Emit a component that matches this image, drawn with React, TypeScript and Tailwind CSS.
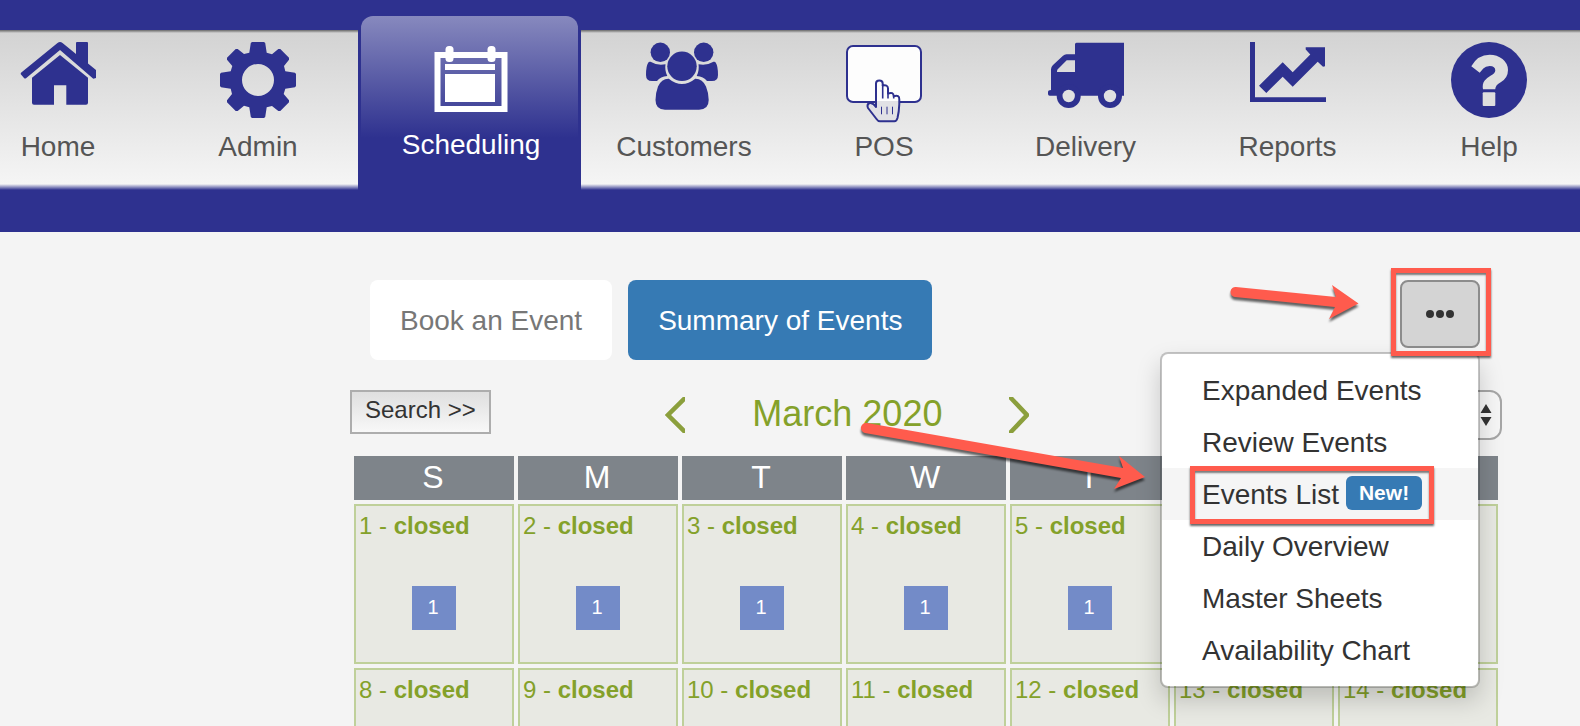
import { ReactNode } from "react";
import clsx from "clsx";

function HomeIcon() {
  return (
    <svg viewBox="0 0 76 76" className="size-[76px]" fill="#2e318f">
      <path d="M37.5 1Q40 -1 42.5 1L56 12V1Q56 0 57 0H67Q68 0 68 1V21.5L76 28V36L73.3 36.7L40 8L6 36.2Q5 37 4 36L1 32.5Q0.3 31.5 1.3 30.6Z" />
      <path d="M40 13L68 35.7V60.7Q68 62.7 66 62.7H46.3V43.3H34V62.7H14Q12 62.7 12 60.7V35.7Z" />
    </svg>
  );
}

function GearIcon() {
  return (
    <svg viewBox="-38 -38 76 76" className="size-[76px]" fill="#2e318f">
      <path
        fillRule="evenodd"
        d="M-6 -38H6L7.2 -37L8.7 -27.3L14 -25.7L20.3 -31L22.3 -31L31 -22.3V-20.3L26 -14L27.3 -8.7L37 -7.2L38 -6V6L37 7.2L27.3 8.7L25.7 14L31 20.3V22.3L22.3 31H20.3L14 26L8.7 27.3L7.2 37L6 38H-6L-7.2 37L-8.7 27.3L-14 25.7L-20.3 31H-22.3L-31 22.3V20.3L-26 14L-27.3 8.7L-37 7.2L-38 6V-6L-37 -7.2L-27.3 -8.7L-25.7 -14L-31 -20.3V-22.3L-22.3 -31H-20.3L-14 -26L-8.7 -27.3L-7.2 -37ZM-16 0A16 16 0 1 0 16 0A16 16 0 1 0 -16 0Z"
      />
    </svg>
  );
}

function CalendarIcon() {
  return (
    <svg viewBox="0 0 76 76" className="size-[76px]" fill="#fff">
      <rect x="4.5" y="13" width="67" height="54" fill="none" stroke="#fff" strokeWidth="6" />
      <rect x="12" y="22" width="50" height="6" />
      <rect x="12" y="32" width="50" height="28" />
      <rect x="12.5" y="4" width="8" height="16" rx="3.5" />
      <rect x="54.5" y="4" width="8" height="16" rx="3.5" />
    </svg>
  );
}

function CustomersIcon() {
  return (
    <svg viewBox="2 0 76 76" className="size-[76px]" fill="#2e318f">
      <circle cx="16.3" cy="10.3" r="9.7" />
      <circle cx="59.7" cy="10.3" r="9.7" />
      <circle cx="38" cy="24.3" r="14.7" />
      <path d="M6.5 19.8Q13.5 24 21.5 22.3Q20.5 28.5 23.3 34Q16.5 34.5 13 39H8Q2 39 2 33Q2 24 4.2 20.8Q5 19.2 6.5 19.8Z" />
      <path d="M69.5 19.8Q62.5 24 54.5 22.3Q55.5 28.5 52.7 34Q59.5 34.5 63 39H68Q74 39 74 33Q74 24 71.8 20.8Q71 19.2 69.5 19.8Z" />
      <path d="M24.8 36.7Q38 47.5 51.2 36.7Q58.5 36.5 62 44.5Q64.7 51 64.7 58Q64.7 67.7 55 67.7H21Q11.5 67.7 11.5 58Q11.5 51 14 44.5Q17.5 36.5 24.8 36.7Z" />
    </svg>
  );
}

function PosIcon() {
  return (
    <svg viewBox="0 0 76 76" className="size-[76px] overflow-visible" fill="none" stroke="#2e318f">
      <defs>
        <linearGradient id="hand" gradientUnits="userSpaceOnUse" x1="0" y1="38" x2="0" y2="80">
          <stop offset="0.5" stopColor="#fdfdfd" />
          <stop offset="0.5" stopColor="#e1e1e5" />
        </linearGradient>
      </defs>
      <rect x="1" y="4" width="74" height="56" rx="6" fill="#fdfdfd" strokeWidth="2" />
      <path
        d="M30 65V41.5Q30 38.5 33.3 38.5Q36.7 38.5 36.7 41.5V43.5Q42 42.5 42 46.5V51.5Q47.5 49.5 47.7 54.3Q53.5 52.5 53.3 57.5V62Q53 70 51.5 76Q50.5 79.3 48.5 79.3H34Q32 79.3 30.5 77L22 66Q20.5 62.5 23.5 61Q27 60.2 30 65Z"
        fill="url(#hand)"
        strokeWidth="2"
        strokeLinejoin="round"
      />
      <path d="M36.7 43V56.5M42 46V56.5M47.7 54V56.5" strokeWidth="1.6" />
      <path d="M35.5 64.7V72.3M41 64.7V72.3M46.5 64.7V72.3" strokeWidth="1" />
    </svg>
  );
}

function TruckIcon() {
  return (
    <svg viewBox="0 0 76 76" className="size-[76px]" fill="#2e318f">
      <path
        fillRule="evenodd"
        d="M27 2.2Q27 0.7 28.5 0.7H76V53.7H1.7Q0 53.7 0 52V50Q0 48 3 48V27.3Q3 25 5 23L15 13.8Q16.5 12.3 18.5 12.3H27ZM27 18.3H18.7L9.5 27.5Q9 28 9 30H27Z"
      />
      <circle cx="20.7" cy="54" r="12" />
      <circle cx="62" cy="54" r="12" />
      <circle cx="20.7" cy="54" r="6.2" fill="#e1e1e1" />
      <circle cx="62" cy="54" r="6.2" fill="#e1e1e1" />
    </svg>
  );
}

function ReportsIcon() {
  return (
    <svg viewBox="0 0 76 76" className="size-[76px]" fill="#2e318f">
      <path d="M0 0H5V55.3H76V60H0Z" />
      <path d="M9 43.7L32.7 20.3L42.7 30.3L60.3 12.5L55.7 7.5V5.3H75V24.3L73 24.7L67.7 19.7L42.7 44.7L32.7 34.7L16.3 51Z" />
    </svg>
  );
}

function HelpIcon() {
  return (
    <svg viewBox="0 0 76 76" className="size-[76px]">
      <circle cx="38" cy="38" r="38" fill="#2e318f" />
      <g fill="#dedede">
        <path d="M20.3 24.3Q26.5 12.7 38.7 12.7Q46 12.7 51.5 17Q57 21.5 57 28Q57 36 49.7 40.3Q44.5 43 44.2 47.3H32Q31 42 33.5 38.8Q35.5 36 39.5 33.7Q44.3 31.2 44.3 28.5Q44.3 24 38.7 24Q34.5 24 32.3 26.5L28.7 30.7Z" />
        <rect x="31.7" y="50.3" width="12.6" height="13.7" rx="1" />
      </g>
    </svg>
  );
}

type NavItemProps = {
  label: string;
  icon: ReactNode;
  active?: boolean;
  className?: string;
};

function NavItem({ label, icon, active, className }: NavItemProps) {
  return (
    <a
      href="#"
      aria-current={active ? "page" : undefined}
      className={clsx(
        "flex flex-col items-center text-[28px] leading-8",
        active
          ? "mx-[3px] h-[174px] gap-[11px] rounded-t-xl bg-[linear-gradient(#8789be,#2e318f_122px)] pt-[26px] text-white"
          : "h-[160px] gap-[13px] bg-[linear-gradient(#6a6a6a,#8a8a8a_1px,#d3d3d3_3px,#f5f5f5_154px,#2e318f_160px)] pt-3 text-[#555]",
        className
      )}
    >
      {icon}
      {label}
    </a>
  );
}

function Header() {
  return (
    <header className="bg-[#2e318f] pt-4 pb-[42px]">
      <nav className="grid grid-cols-[158fr_200fr_223fr_203fr_200fr_203fr_201fr_192fr] items-end">
        <NavItem label="Home" icon={<HomeIcon />} className="pr-[42px]" />
        <NavItem label="Admin" icon={<GearIcon />} />
        <NavItem label="Scheduling" icon={<CalendarIcon />} active className="pl-[3px]" />
        <NavItem label="Customers" icon={<CustomersIcon />} className="pl-[3px]" />
        <NavItem label="POS" icon={<PosIcon />} />
        <NavItem label="Delivery" icon={<TruckIcon />} />
        <NavItem label="Reports" icon={<ReportsIcon />} />
        <NavItem label="Help" icon={<HelpIcon />} className="pl-2.5" />
      </nav>
    </header>
  );
}

const menuItems = [
  "Expanded Events",
  "Review Events",
  "Events List",
  "Daily Overview",
  "Master Sheets",
  "Availability Chart",
];

const highlight =
  "pointer-events-none absolute border-5 border-[#ff5b4d] shadow-[0_2px_2px_rgba(0,0,0,0.6),inset_0_2px_2px_rgba(0,0,0,0.5)]";

function EventsMenu() {
  return (
    <div className="relative mr-[22px]">
      <button
        type="button"
        aria-label="More"
        aria-expanded="true"
        className="flex h-[68px] w-20 items-center justify-center rounded-lg border-2 border-[#8c8c8c] bg-[#d4d4d4]"
      >
        <svg viewBox="0 0 28 8" className="h-2 w-7" fill="#333">
          <circle cx="4" cy="4" r="4" />
          <circle cx="14" cy="4" r="4" />
          <circle cx="24" cy="4" r="4" />
        </svg>
      </button>
      <ul className="absolute top-[72px] right-0 z-10 w-80 rounded-lg border-2 border-black/20 bg-white bg-clip-padding py-2.5 shadow-[0_12px_24px_rgba(0,0,0,0.18)]">
        {menuItems.map((item) => (
          <li key={item} className={clsx("relative", item === "Events List" && "bg-[#f5f5f5]")}>
            <a href="#" className="flex h-[52px] items-center gap-[7px] px-10 pt-0.5 text-[28px] text-[#333]">
              {item}
              {item === "Events List" && (
                <span className="mb-1 rounded-md bg-[#367ab4] px-[13px] text-[21px] leading-[34px] font-bold text-white">
                  New!
                </span>
              )}
            </a>
            {item === "Events List" && (
              <span className={clsx(highlight, "-top-0.5 -bottom-1 left-7 w-[244px]")} />
            )}
          </li>
        ))}
      </ul>
      <span className={clsx(highlight, "-top-3 -right-[11px] -bottom-2 -left-[9px] z-20")} />
    </div>
  );
}

function Toolbar() {
  return (
    <div className="flex items-start justify-between pl-5">
      <div className="flex gap-4 text-[28px]">
        <button type="button" className="h-20 rounded-lg bg-white px-[30px] pt-0.5 text-[#777]">
          Book an Event
        </button>
        <button type="button" className="h-20 rounded-lg bg-[#367ab4] px-[30px] pt-0.5 text-white">
          Summary of Events
        </button>
      </div>
      <EventsMenu />
    </div>
  );
}

function MonthBar() {
  return (
    <div className="mt-[30px] flex items-start justify-between">
      <button
        type="button"
        className="h-11 border-2 border-[#adadad] bg-linear-to-b from-[#dfdfdf] to-[#f8f8f8] px-[13px] pb-1 text-2xl text-[#333]"
      >
        Search &gt;&gt;
      </button>
      <div className="flex h-[50px] w-[364px] items-center justify-between">
        <button type="button" aria-label="Previous month">
          <svg viewBox="0 0 20 36" className="h-9 w-5" fill="none" stroke="#8b9f3c" strokeWidth="4.5">
            <path d="M22 -1L3 18L22 37" />
          </svg>
        </button>
        <h2 className="pb-0.5 text-4xl text-[#84a12a]">March 2020</h2>
        <button type="button" aria-label="Next month">
          <svg viewBox="0 0 20 36" className="h-9 w-5" fill="none" stroke="#8b9f3c" strokeWidth="4.5">
            <path d="M0 -1L18 18L0 37" />
          </svg>
        </button>
      </div>
      <div className="relative">
        <select
          aria-label="Calendar"
          className="h-[50px] w-[298px] appearance-none rounded-xl border-2 border-[#a6a6a6] bg-[#f6f6f6]"
        />
        <svg viewBox="0 0 12 22" className="absolute top-3.5 right-2.5 h-[22px] w-3" fill="#333">
          <path d="M6 0L11.5 9H0.5ZM6 22L11.5 13H0.5Z" />
        </svg>
      </div>
    </div>
  );
}

const weekDays = ["S", "M", "T", "W", "T", "F", "S"];
const weeks = [
  { days: [1, 2, 3, 4, 5, 6, 7], events: 1 },
  { days: [8, 9, 10, 11, 12, 13, 14] },
];

function Calendar() {
  return (
    <table className="mt-3 w-full table-fixed border-separate border-spacing-1">
      <thead>
        <tr>
          {weekDays.map((day, i) => (
            <th
              key={i}
              className="h-11 bg-[#7e848a] p-0 pr-0.5 pb-0.5 text-[32px] leading-8 font-normal text-white"
            >
              {day}
            </th>
          ))}
        </tr>
      </thead>
      <tbody>
        {weeks.map((week) => (
          <tr key={week.days[0]}>
            {week.days.map((day) => (
              <td
                key={day}
                className="h-40 border-2 border-[#bfd09a] bg-[#e8e9e3] px-[3px] py-1 align-top text-2xl text-[#84a12a]"
              >
                {day} - <strong>closed</strong>
                {week.events && (
                  <a
                    href="#"
                    className="mx-auto mt-11 flex size-11 items-center justify-center bg-[#738bc8] pr-0.5 pb-0.5 text-xl text-white"
                  >
                    {week.events}
                  </a>
                )}
              </td>
            ))}
          </tr>
        ))}
      </tbody>
    </table>
  );
}

// callout arrows that float over the page
function Arrows() {
  return (
    <svg
      viewBox="0 0 1580 726"
      className="pointer-events-none absolute top-0 left-0 z-30 w-full drop-shadow-[0_3px_1px_rgba(0,0,0,0.6)]"
      fill="#ff5b4d"
    >
      <path d="M1236 287L1336 297L1332 285L1358.5 303.5L1329 319L1335 307L1235 297A5 5 0 0 1 1236 287Z" />
      <path d="M867 423L1123 468L1119 456L1145 477L1114 489L1121 478L865 433A5 5 0 0 1 867 423Z" />
    </svg>
  );
}

export default function App() {
  return (
    <div className="relative h-screen overflow-hidden bg-[#f4f4f4] font-['Liberation_Sans',Arial,sans-serif]">
      <Header />
      <main className="pt-12 pr-[78px] pl-[350px]">
        <Toolbar />
        <MonthBar />
        <Calendar />
      </main>
      <Arrows />
    </div>
  );
}
